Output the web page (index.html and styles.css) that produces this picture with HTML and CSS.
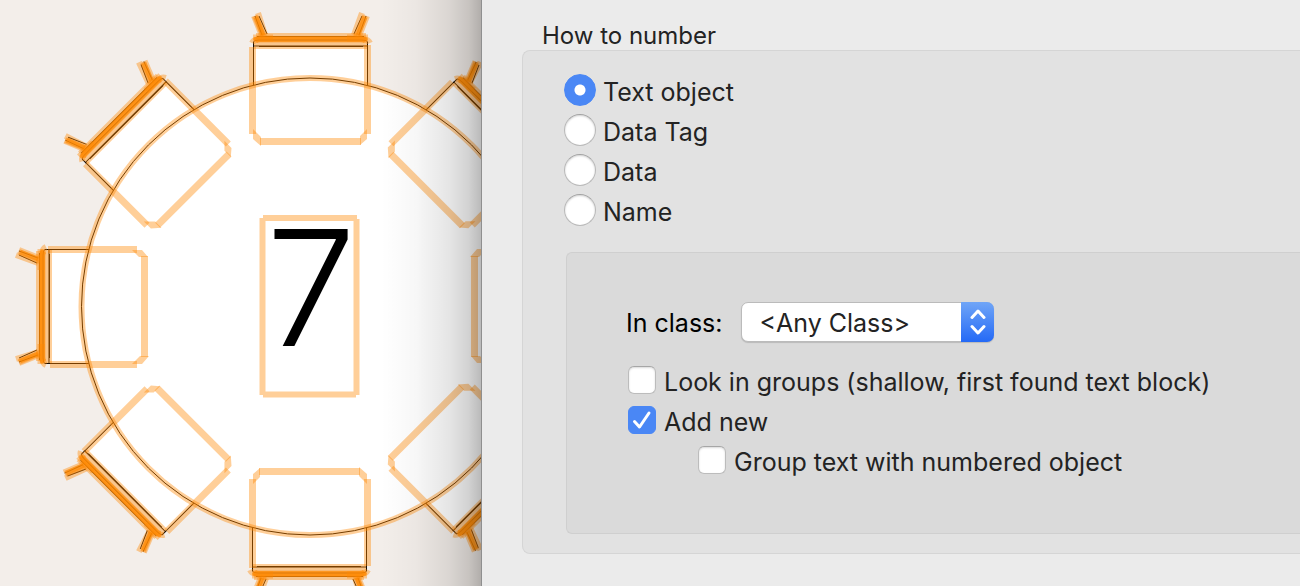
FILE: index.html
```html
<!DOCTYPE html>
<html lang="en">
<head>
<meta charset="utf-8">
<title>How to number</title>
<link rel="stylesheet" href="styles.css">
</head>
<body>
<main class="window">
  <section class="drawing" aria-label="Table plan">
    <svg class="plan" viewBox="0 0 482 586" preserveAspectRatio="xMinYMin slice" role="img" aria-label="Round table 7">
      <defs>
        <g id="chair-ink">
          <path class="seat" d="M253.500 46 V134 L261 141 H360 L367.500 134 V46 Z"/>
          <path class="line" d="M253.500 47 V42 Q253.500 40 259 40 H362 Q367.500 40 367.500 42 V47 M257 36.500 H364 M259 46.500 H363 M255 16 L262 35 M259 16 L267 34 M366 16 L359 35 M362 16 L354 34"/>
        </g>
        <g id="chair-glow">
          <path class="glow wide" d="M252.500 47 V134 M367.500 45 V134 M260 141.500 H361"/>
          <path class="glow-fill" d="M253 129 L261 137 V146 L253 139 Z M367 129 L360 136 V145 L367 139 Z"/>
          <path class="glow" d="M256 36 H366"/>
          <path class="glow" d="M254 40 H367"/>
          <path class="glow" d="M252 43 Q254 39 259 39.500 H363 Q368 39 370 43"/>
          <path class="glow" d="M254 46 H367"/>
          <path class="glow" d="M254 16 L262 36 M367 16 L359 36"/>
          <path class="glow" d="M255 16 L264 37 M365 16 L356 37"/>
          <path class="glow" d="M258 13 L265 35 M362 13 L354 35"/>
          <path class="glow wide" d="M253 38 H273 M347 38 H368"/>
          <path class="glow strong" d="M255 41 Q257 39 260 39 H361 Q364 39 366 41"/>
          <path class="glow strong leg" d="M256 17 L263 35 M365 17 L358 35"/>
        </g>
      </defs>
      <rect class="floor" width="900" height="900"/>
      <g>
        <use href="#chair-ink"/>
        <use href="#chair-ink" transform="rotate(45 310 306)"/>
        <use href="#chair-ink" transform="rotate(90 310 306)"/>
        <use href="#chair-ink" transform="rotate(135 310 306)"/>
        <use href="#chair-ink" transform="rotate(180 310 306.500)"/>
        <use href="#chair-ink" transform="rotate(225 310 307)"/>
        <use href="#chair-ink" transform="rotate(270 310 307)"/>
        <use href="#chair-ink" transform="rotate(315 310 307)"/>
      </g>
      <circle class="table" cx="310" cy="306.500" r="228.500"/>
      <g>
        <use href="#chair-glow"/>
        <use href="#chair-glow" transform="rotate(45 310 306)"/>
        <use href="#chair-glow" transform="rotate(90 310 306)"/>
        <use href="#chair-glow" transform="rotate(135 310 306)"/>
        <use href="#chair-glow" transform="rotate(180 310 306.500)"/>
        <use href="#chair-glow" transform="rotate(225 310 307)"/>
        <use href="#chair-glow" transform="rotate(270 310 307)"/>
        <use href="#chair-glow" transform="rotate(315 310 307)"/>
      </g>
      <circle class="glow" cx="310" cy="306.500" r="228.500"/>
      <text class="table-number" x="311" y="346" text-anchor="middle">7</text>
      <path class="glow number-box" d="M263 218 H357 M263 394.500 H356 M262.500 218 V395 M356.500 219 V395"/>
    </svg>
  </section>

  <form class="panel">
    <fieldset class="numbering">
      <legend class="title">How to number</legend>
      <div class="group">
        <div class="options">
          <label class="option"><input class="radio" type="radio" name="how" checked><span class="caption">Text object</span></label>
          <label class="option"><input class="radio" type="radio" name="how"><span class="caption">Data Tag</span></label>
          <label class="option"><input class="radio" type="radio" name="how"><span class="caption">Data</span></label>
          <label class="option"><input class="radio" type="radio" name="how"><span class="caption">Name</span></label>
        </div>
        <div class="details">
          <div class="class-row">
            <label class="class-label" for="class">In class:</label>
            <span class="popup">
              <select class="select" id="class"><option>&lt;Any Class&gt;</option></select>
              <span class="stepper" aria-hidden="true">
                <svg width="16" height="26" viewBox="0 0 16 26"><path class="mark" d="M2 8.500 L8 2 L14 8.500 M2 17.500 L8 24 L14 17.500"/></svg>
              </span>
            </span>
          </div>
          <label class="option check"><span class="tick"><input class="box" type="checkbox"></span><span class="caption">Look in groups (shallow, first found text block)</span></label>
          <label class="option check"><span class="tick"><input class="box" type="checkbox" checked><svg class="tick-mark" viewBox="0 0 28 28" aria-hidden="true"><path class="mark" d="M6.500 15.500 L11.500 21 L21 7"/></svg></span><span class="caption">Add new</span></label>
          <label class="option check nested"><span class="tick"><input class="box" type="checkbox"></span><span class="caption">Group text with numbered object</span></label>
        </div>
      </div>
    </fieldset>
  </form>
</main>
</body>
</html>
```
FILE: styles.css
```css
* {
  box-sizing: border-box;
}

body {
  margin: 0;
  background: #ebebeb;
  color: #232323;
  font-family: Inter, "Liberation Sans", sans-serif;
  font-size: 25px;
  line-height: 32px;
}

.window {
  display: grid;
  grid-template-columns: 482px minmax(0, 1fr);
  min-height: 100vh;
  overflow: hidden;
}

.drawing {
  position: relative;
  overflow: hidden;
  background: #f3eeea;
  border-right: 1px solid #8f8f8f;
}

.drawing::after {
  content: "";
  position: absolute;
  inset: 0 0 0 auto;
  width: 100px;
  background: linear-gradient(to right, rgba(0, 0, 0, 0), rgba(0, 0, 0, 0.03) 35%, rgba(0, 0, 0, 0.1) 68%, rgba(0, 0, 0, 0.18) 88%, rgba(0, 0, 0, 0.27));
}

.plan {
  display: block;
  width: 482px;
  height: 586px;
}

.floor {
  fill: #f3eeea;
}

.seat,
.table {
  fill: #fff;
  stroke: #1a0d00;
  stroke-width: 1px;
}

.line {
  fill: none;
  stroke: #1a0d00;
  stroke-width: 1px;
}

.glow {
  fill: none;
  stroke: #ff8800;
  stroke-opacity: 0.4;
  stroke-width: 6px;
}

.wide {
  stroke-width: 7px;
}

.strong {
  stroke-opacity: 0.6;
}

.leg {
  stroke-width: 5px;
}

.glow-fill {
  fill: #ff8800;
  fill-opacity: 0.4;
}

.table-number {
  font-family: Inter, sans-serif;
  font-size: 161px;
  font-weight: 350;
  fill: #000;
}

.panel {
  min-width: 0;
  padding: 22px 0 33px 40px;
}

.numbering {
  min-width: 0;
  margin: 0;
  padding: 0;
  border: 0;
}

.title {
  padding: 0 0 0 20px;
  font-size: 24px;
  line-height: 28px;
}

.group {
  padding: 19px 0 19px 41px;
  background: #e2e2e2;
  border: 1px solid #d5d5d5;
  border-right: 0;
  border-radius: 8px 0 0 8px;
}

.options {
  padding-bottom: 22px;
}

.option {
  display: flex;
  align-items: center;
  gap: 7px;
  height: 40px;
}

.caption {
  padding-top: 3px;
  white-space: nowrap;
}

.radio {
  appearance: none;
  flex: none;
  width: 32px;
  height: 32px;
  margin: 0;
  background: #fff;
  border: 1px solid #b9b9b9;
  border-top-color: #a2a2a2;
  border-radius: 50%;
  box-shadow: inset 0 1px 2px rgba(0, 0, 0, 0.18);
}

.radio:checked {
  background: radial-gradient(circle, #fff 5px, #4a87f5 6px);
  border-color: #4a87f5;
  box-shadow: none;
}

.details {
  margin-left: 2px;
  padding: 49px 0 53px 59px;
  background: #dadada;
  border: 1px solid #cfcfcf;
  border-right: 0;
  border-radius: 6px 0 0 6px;
}

.class-row {
  display: flex;
  align-items: center;
  gap: 19px;
  margin-bottom: 18px;
}

.class-label {
  padding-top: 2px;
  color: #000;
}

.popup {
  position: relative;
  width: 253px;
}

.select {
  appearance: none;
  display: block;
  width: 100%;
  height: 40px;
  padding: 2px 40px 0 17px;
  background: #fff;
  border: 1px solid #bbb;
  border-radius: 7px;
  box-shadow: 0 1px 1px rgba(0, 0, 0, 0.15);
  color: #232323;
  font: inherit;
}

.stepper {
  position: absolute;
  inset: 0 0 0 auto;
  display: grid;
  place-items: center;
  width: 33px;
  background: linear-gradient(#70a5f7, #2469f6);
  border-radius: 0 7px 7px 0;
  pointer-events: none;
}

.mark {
  fill: none;
  stroke: #fff;
  stroke-width: 3px;
  stroke-linecap: round;
  stroke-linejoin: round;
}

.check {
  gap: 8px;
  padding-left: 2px;
}

.nested {
  padding-left: 72px;
}

.tick {
  position: relative;
  flex: none;
  width: 28px;
  height: 28px;
}

.box {
  appearance: none;
  display: block;
  width: 28px;
  height: 28px;
  margin: 0;
  background: #fff;
  border: 1px solid #bcbcbc;
  border-top-color: #a6a6a6;
  border-radius: 6px;
  box-shadow: inset 0 1px 2px rgba(0, 0, 0, 0.15);
}

.box:checked {
  background: #4a87f5;
  border-color: #4a87f5;
  box-shadow: none;
}

.tick-mark {
  position: absolute;
  inset: 0;
  pointer-events: none;
}
```
